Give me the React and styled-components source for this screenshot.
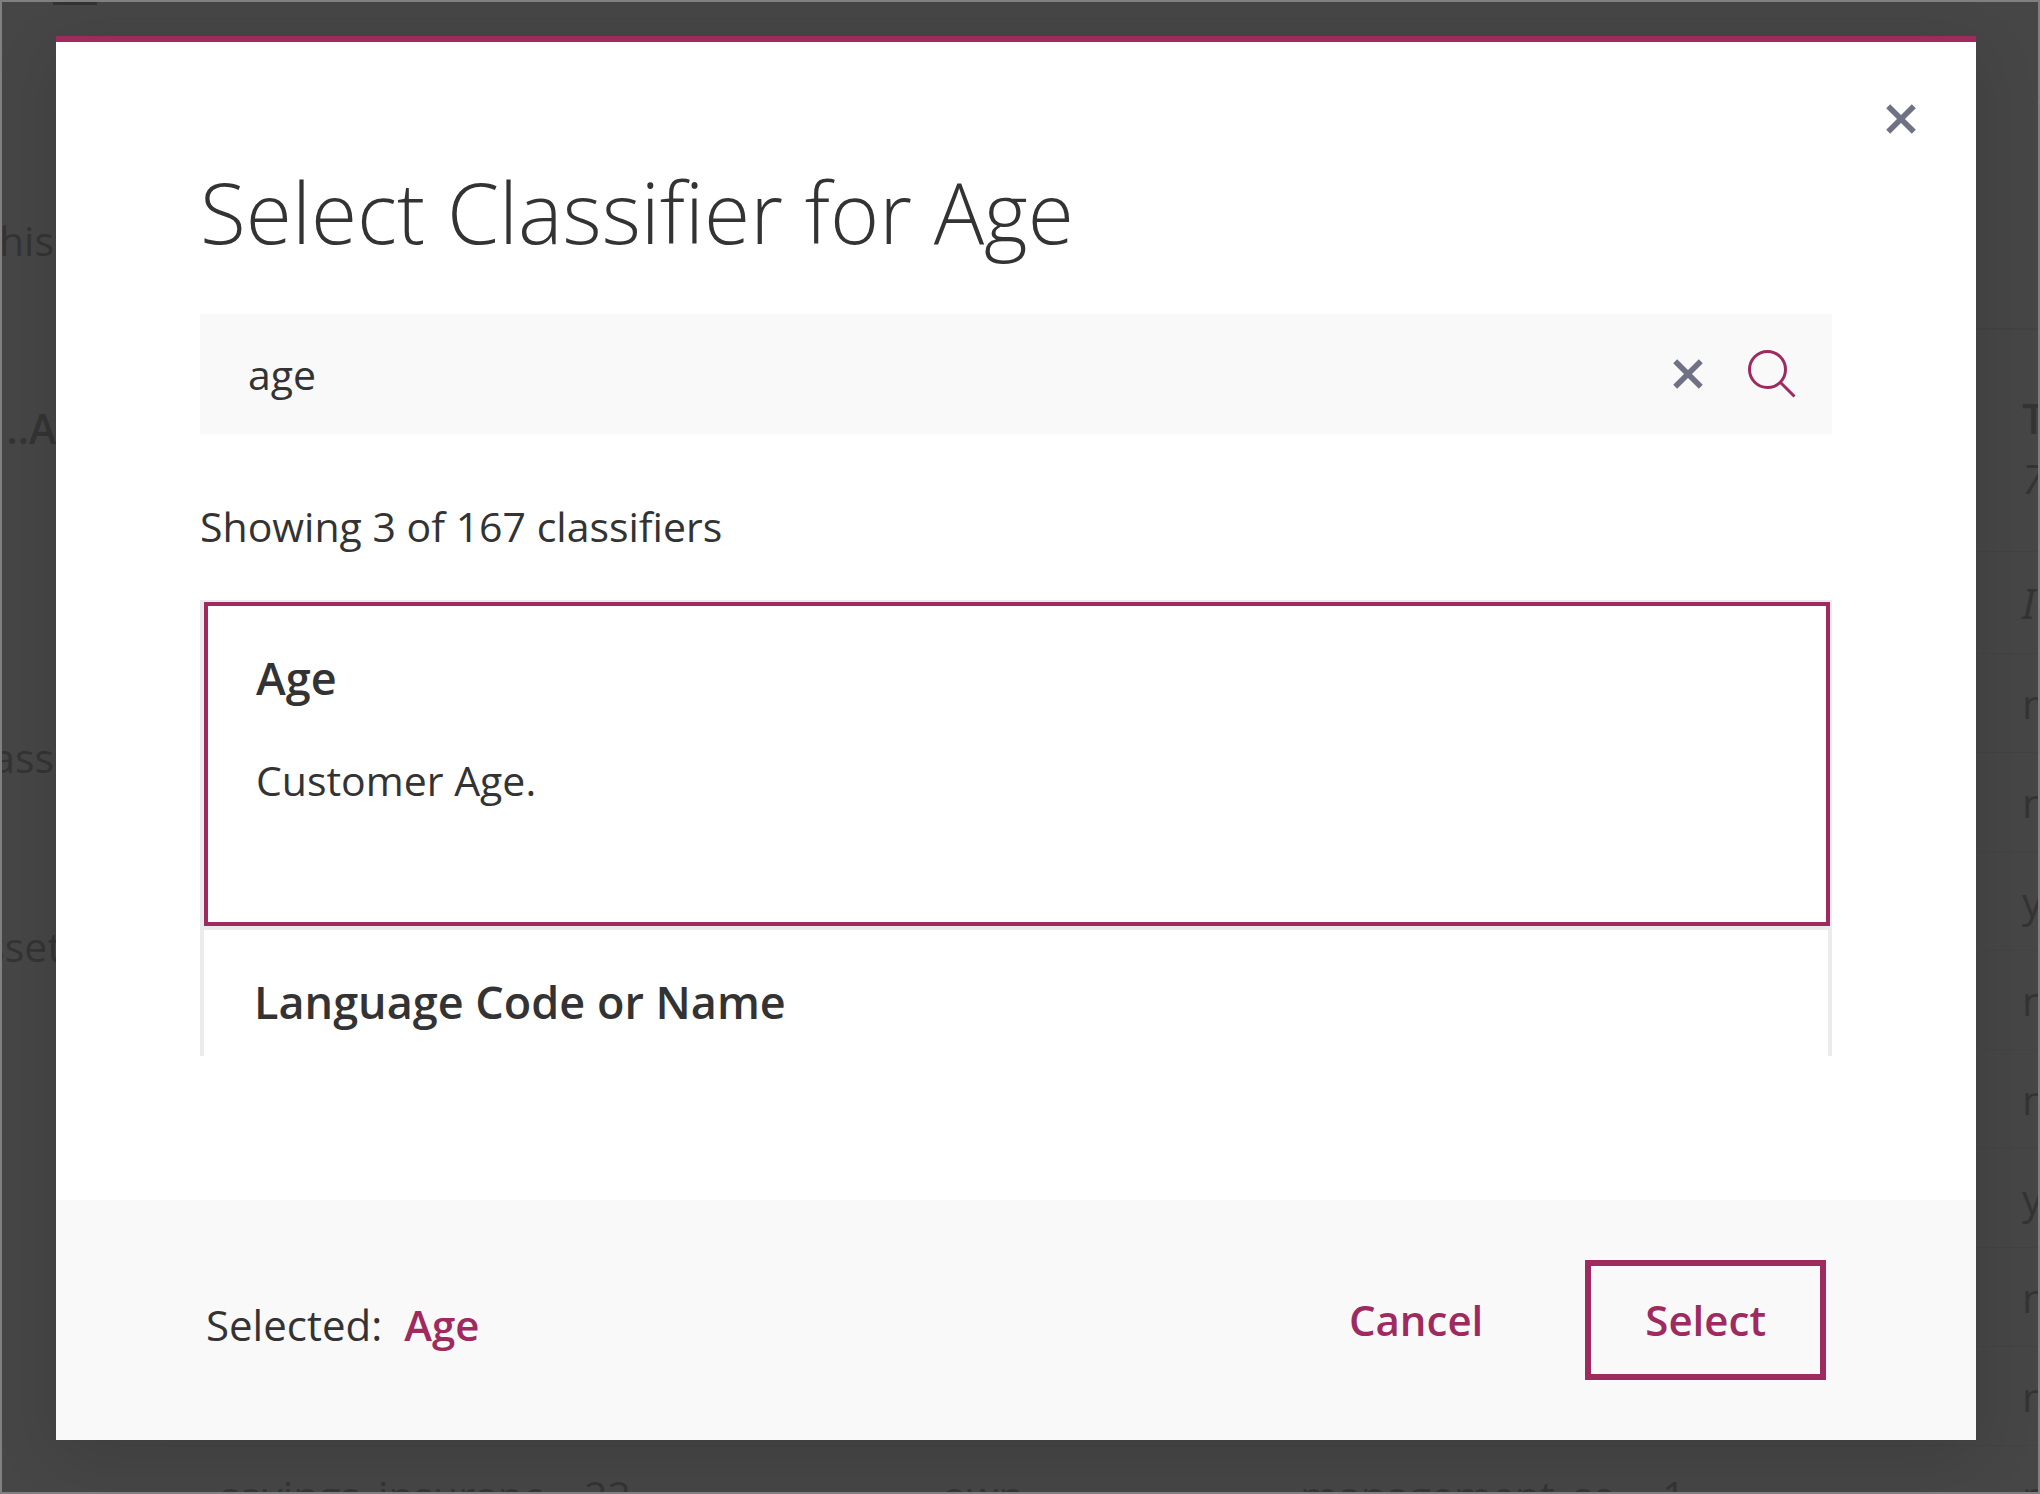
import React, { useState } from "react";
import styled, { createGlobalStyle, css } from "styled-components";

const accent = "#9e2a60";
const ink = "#333333";
const shade = "#464646";
const faded = "#343434";

const GlobalStyle = createGlobalStyle`
  *, *::before, *::after { box-sizing: border-box; }
  body { margin: 0; background: ${shade}; }
  button, input { font: inherit; color: inherit; }
`;

const Page = styled.div`
  position: relative;
  height: 100vh;
  overflow: hidden;
  border: 2px solid #808080;
  background: ${shade};
  color: ${ink};
  font-family: "Open Sans", "Noto Sans", sans-serif;
  font-size: 41px;
  line-height: 56px;
`;

const Backdrop = styled.div`
  display: grid;
  grid-template-columns: 160px minmax(0, 1fr);
  color: ${faded};
`;

const Side = styled.div`
  display: flex;
  flex-direction: column;
`;

const MenuMark = styled.div`
  width: 44px;
  height: 3px;
  margin-left: 51px;
  background: #333333;
`;

const SideText = styled.div`
  display: flex;
  justify-content: flex-end;
  width: ${(p) => p.$width || 52}px;
  margin-top: ${(p) => p.$gap}px;
  font-weight: ${(p) => (p.$strong ? 600 : 400)};
  white-space: nowrap;
`;

const Sheet = styled.table`
  width: 100%;
  margin-top: 326px;
  table-layout: fixed;
  border-collapse: separate;
  border-spacing: 0;
  text-align: left;
  white-space: nowrap;
`;

const Col = styled.col`
  width: ${(p) => (p.$width ? `${p.$width}px` : "auto")};
`;

const HeadRow = styled.tr`
  height: 224px;
`;

const Row = styled.tr`
  height: ${(p) => p.$height || 99}px;
`;

const cell = css`
  padding: 0;
  border-bottom: 1px solid #434343;
  font-weight: 400;
`;

const HeadCell = styled.th`
  ${cell}
  padding-top: 60px;
  border-top: 2px solid #424242;
  vertical-align: top;
`;

const HeadName = styled.div`
  margin-bottom: 4px;
  font-weight: 600;
`;

const HeadNote = styled.div`
  font-style: italic;
`;

const Cell = styled.td`
  ${cell}
  font-style: ${(p) => (p.$italic ? "italic" : "normal")};
  font-family: ${(p) => (p.$italic ? '"Noto Sans", sans-serif' : "inherit")};
`;

const Overlay = styled.div`
  position: absolute;
  inset: 0;
  padding: 34px 62px 52px 54px;
`;

const Dialog = styled.section`
  display: flex;
  flex-direction: column;
  border-top: 6px solid ${accent};
  background: #ffffff;
  box-shadow: 0 16px 60px rgba(0, 0, 0, 0.12);
`;

const Header = styled.header`
  display: flex;
  justify-content: flex-end;
  padding: 44px 42px 0;
`;

const IconButton = styled.button`
  display: flex;
  align-items: center;
  justify-content: center;
  width: 66px;
  height: 66px;
  padding: 0;
  border: 0;
  background: none;
`;

const Body = styled.div`
  padding: 0 144px 144px;
`;

const Title = styled.h1`
  margin: 0;
  padding: 4px 0 46px;
  font-size: 84px;
  line-height: 112px;
  font-weight: 300;
`;

const SearchBar = styled.div`
  display: flex;
  align-items: center;
  gap: 18px;
  height: 120px;
  padding: 0 27px 0 48px;
  background: #f9f9f9;
`;

const SearchInput = styled.input`
  flex: 1;
  min-width: 0;
  height: 100%;
  padding: 0;
  border: 0;
  outline: 0;
  background: none;
`;

const Count = styled.p`
  margin: 0;
  padding: 64px 0 46px;
`;

const List = styled.div`
  height: 456px;
  overflow: hidden;
`;

const Card = styled.button`
  display: block;
  width: 100%;
  height: 330px;
  padding: 0;
  text-align: left;
  background: #ffffff;
  border: 0 solid #ebebeb;
  border-width: ${(p) => (p.$selected ? "2px 2px 4px 4px" : "0 4px 4px 4px")};
`;

const CardInner = styled.span`
  display: flex;
  flex-direction: column;
  gap: 44px;
  height: 100%;
  padding: 42px 50px;
  border: 0 solid ${accent};
  border-width: ${(p) => (p.$selected ? "4px" : "0")};
  ${(p) => p.$selected && "padding-left: 48px;"}
`;

const CardTitle = styled.span`
  font-size: 45px;
  line-height: 60px;
  font-weight: 600;
`;

const Footer = styled.footer`
  display: flex;
  align-items: center;
  height: 240px;
  padding: 0 150px;
  background: #f9f9f9;
  font-size: 42px;
`;

const Selected = styled.p`
  display: flex;
  gap: 22px;
  flex: 1;
  margin: 0;
  padding-top: 10px;
`;

const Value = styled.strong`
  color: ${accent};
  font-weight: 600;
`;

const Action = styled.button`
  height: 120px;
  padding: 0 54px;
  color: ${accent};
  font-weight: 600;
  background: none;
  border: 6px solid ${(p) => (p.$outlined ? accent : "transparent")};
`;

const Actions = styled.div`
  display: flex;
  gap: 42px;
`;

const Cross = () => (
  <svg width="30" height="30" viewBox="0 0 30 30" fill="none" stroke="#6f7285" strokeWidth="5.6" aria-hidden="true">
    <path d="M2.2 2.2 27.8 27.8M27.8 2.2 2.2 27.8" />
  </svg>
);

const Magnifier = () => (
  <svg width="48" height="48" viewBox="0 0 48 48" fill="none" stroke={accent} strokeWidth="3" aria-hidden="true">
    <circle cx="19.5" cy="19.5" r="18" />
    <path d="M32.5 32.5 46.5 46.5" />
  </svg>
);

const classifiers = [
  { name: "Age", description: "Customer Age." },
  { name: "Language Code or Name" },
];

const columns = [58, 364, 358, 358, 362, null, 16];

const rows = [
  ["", "", "", "", "", "", "n"],
  ["", "", "", "", "", "", "n"],
  ["", "", "", "", "", "", "y"],
  ["", "", "", "", "", "", "n"],
  ["", "", "", "", "", "", "n"],
  ["", "", "", "", "", "", "y"],
  ["", "", "", "", "", "", "n"],
  ["", "", "", "", "", "", "n"],
  ["", "savings_insuranc", "22", "own", "management_se", "1", "n"],
];

export default function App() {
  const [query, setQuery] = useState("age");
  const [selected, setSelected] = useState("Age");

  return (
    <Page>
      <GlobalStyle />
      <Backdrop aria-hidden="true">
        <Side>
          <MenuMark />
          <SideText $gap={207}>his</SideText>
          <SideText $gap={132} $width={54} $strong>..A</SideText>
          <SideText $gap={273}>ass</SideText>
          <SideText $gap={133} $width={60}>sset</SideText>
        </Side>
        <Sheet>
          <colgroup>
            {columns.map((width, i) => <Col key={i} $width={width} />)}
          </colgroup>
          <thead>
            <HeadRow>
              <HeadCell colSpan={6} />
              <HeadCell>
                <HeadName>T</HeadName>
                <HeadNote>7</HeadNote>
              </HeadCell>
            </HeadRow>
          </thead>
          <tbody>
            <Row $height={102}>
              <Cell colSpan={6} />
              <Cell $italic>I</Cell>
            </Row>
            {rows.map((values, r) => (
              <Row key={r}>
                {values.map((value, c) => <Cell key={c}>{value}</Cell>)}
              </Row>
            ))}
          </tbody>
        </Sheet>
      </Backdrop>
      <Overlay>
        <Dialog role="dialog" aria-labelledby="dialog-title">
          <Header>
            <IconButton type="button" aria-label="Close"><Cross /></IconButton>
          </Header>
          <Body>
            <Title id="dialog-title">Select Classifier for Age</Title>
            <SearchBar>
              <SearchInput aria-label="Search classifiers" value={query} onChange={(e) => setQuery(e.target.value)} />
              <IconButton type="button" aria-label="Clear" onClick={() => setQuery("")}><Cross /></IconButton>
              <IconButton type="button" aria-label="Search"><Magnifier /></IconButton>
            </SearchBar>
            <Count>Showing 3 of 167 classifiers</Count>
            <List>
              {classifiers.map((c) => (
                <Card key={c.name} type="button" $selected={c.name === selected} onClick={() => setSelected(c.name)}>
                  <CardInner $selected={c.name === selected}>
                    <CardTitle>{c.name}</CardTitle>
                    {c.description && <span>{c.description}</span>}
                  </CardInner>
                </Card>
              ))}
            </List>
          </Body>
          <Footer>
            <Selected>Selected: <Value>{selected}</Value></Selected>
            <Actions>
              <Action type="button">Cancel</Action>
              <Action type="button" $outlined>Select</Action>
            </Actions>
          </Footer>
        </Dialog>
      </Overlay>
    </Page>
  );
}
